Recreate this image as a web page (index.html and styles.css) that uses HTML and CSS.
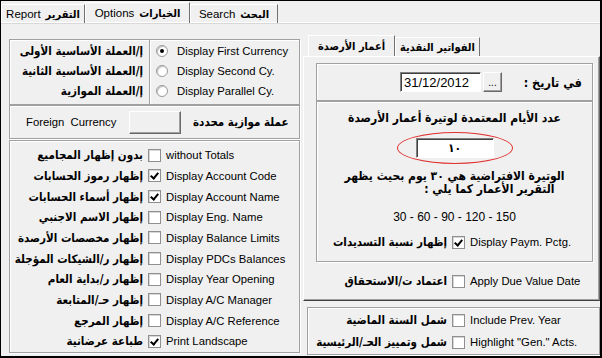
FILE: index.html
```html
<!DOCTYPE html>
<html lang="en">
<head>
    <meta charset="UTF-8">
    <title>Report Options</title>
    <link rel="stylesheet" href="styles.css">
</head>
<body>
    <div class="window">
        <div class="tabs">
            <div class="tab tab-report">Report <b class="ar">التقرير</b></div>
            <div class="tab tab-options active">Options <b class="ar">الخيارات</b></div>
            <div class="tab tab-search">Search <b class="ar">البحث</b></div>
        </div>

        <div class="page">
            <!-- left side: currency + display options -->
            <div class="left">
                <div class="group radios">
                    <div class="ar-col">
                        <b class="ar">إ/العملة الأساسية الأولى</b>
                        <b class="ar">إ/العملة الأساسية الثانية</b>
                        <b class="ar">إ/العملة الموازية</b>
                    </div>
                    <div class="en-col">
                        <div class="opt"><span class="radio on"></span>Display First Currency</div>
                        <div class="opt"><span class="radio"></span>Display Second Cy.</div>
                        <div class="opt"><span class="radio"></span>Display Parallel Cy.</div>
                    </div>
                </div>

                <div class="group currency">
                    <span class="cur-label">Foreign&nbsp; Currency</span>
                    <span class="btn cur-btn"></span>
                    <b class="ar cur-ar">عملة موازية محددة</b>
                </div>

                <div class="group checks">
                    <div class="row"><b class="ar">بدون إظهار المجاميع</b><span class="check"></span><span>without Totals</span></div>
                    <div class="row"><b class="ar">إظهار رموز الحسابات</b><span class="check on"></span><span>Display Account Code</span></div>
                    <div class="row"><b class="ar">إظهار أسماء الحسابات</b><span class="check on"></span><span>Display Account Name</span></div>
                    <div class="row"><b class="ar">إظهار الاسم الاجنبي</b><span class="check"></span><span>Display Eng. Name</span></div>
                    <div class="row"><b class="ar">إظهار مخصصات الأرصدة</b><span class="check"></span><span>Display Balance Limits</span></div>
                    <div class="row"><b class="ar">إظهار ر/الشيكات المؤجلة</b><span class="check"></span><span>Display PDCs Balances</span></div>
                    <div class="row"><b class="ar">إظهار ر/بداية العام</b><span class="check"></span><span>Display Year Opening</span></div>
                    <div class="row"><b class="ar">إظهار حـ/المتابعة</b><span class="check"></span><span>Display A/C Manager</span></div>
                    <div class="row"><b class="ar">إظهار المرجع</b><span class="check"></span><span>Display A/C Reference</span></div>
                    <div class="row"><b class="ar">طباعة عرضانية</b><span class="check on"></span><span>Print Landscape</span></div>
                </div>
            </div>

            <!-- right side: ageing options -->
            <div class="right">
                <div class="subtabs">
                    <div class="subtab active"><b class="ar">أعمار الأرصدة</b></div>
                    <div class="subtab"><b class="ar">الفواتير النقدية</b></div>
                </div>
                <div class="subpage">
                    <div class="group date-box">
                        <span class="field date-field">31/12/2012</span>
                        <span class="btn dots">...</span>
                        <b class="ar date-label">في تاريخ :</b>
                    </div>

                    <div class="group days">
                        <b class="ar days-title">عدد الأيام المعتمدة لوتيرة أعمار الأرصدة</b>
                        <div class="ring">
                            <span class="field days-field"><b class="ar">١٠</b></span>
                        </div>
                        <div class="note">
                            <b class="ar">الوتيرة الافتراضية هي ٣٠ يوم بحيث يظهر</b>
                            <b class="ar note-2">التقرير الأعمار كما يلي :</b>
                        </div>
                        <div class="periods">30 - 60 - 90 - 120 - 150</div>
                        <div class="row paym"><b class="ar">إظهار نسبة التسديدات</b><span class="check on"></span><span>Display Paym. Pctg.</span></div>
                    </div>

                    <div class="row due"><b class="ar">اعتماد ت/الاستحقاق</b><span class="check"></span><span>Apply Due Value Date</span></div>
                </div>

                <div class="group bottom">
                    <div class="row"><b class="ar">شمل السنة الماضية</b><span class="check"></span><span>Include Prev. Year</span></div>
                    <div class="row"><b class="ar">شمل وتمييز الحـ/الرئيسية</b><span class="check"></span><span>Highlight "Gen." Acts.</span></div>
                </div>
            </div>
        </div>
    </div>
</body>
</html>
```

FILE: styles.css
```css
/* Base */
* {
    box-sizing: border-box;
}

body {
    margin: 0;
    background: #fff;
}

.window {
    width: 602px;
    height: 358px;
    border: 1px solid #000;
    border-right-width: 2px;
    border-bottom-width: 2px;
    background: #f0f0f0;
    font: 11.3px "Liberation Sans", "DejaVu Sans", sans-serif;
    color: #000;
    display: flex;
    flex-direction: column;
    overflow: hidden;
}

.ar {
    font-family: "DejaVu Sans Condensed", "DejaVu Sans", sans-serif;
    font-weight: bold;
    font-size: 11.5px;
    direction: rtl;
    unicode-bidi: isolate;
    white-space: nowrap;
}

/* Top tabs */
.tabs {
    display: flex;
    height: 22px;
    flex: none;
    border-bottom: 1px solid #fff;
    font-size: 11.5px;
}

.tabs .ar {
    font-size: 11px;
}

.tab {
    display: flex;
    align-items: center;
    justify-content: center;
    gap: 5px;
    height: 19px;
    margin-top: 3px;
    border-left: 1px solid #fff;
    border-top: 1px solid #fff;
    border-right: 1px solid #707070;
    white-space: nowrap;
}

.tab.active {
    height: 21px;
    margin-top: 1px;
}

.tab-report { width: 84px; }
.tab-options { width: 105px; }
.tab-search { width: 88px; }

/* Page */
.page {
    flex: 1;
    display: flex;
    border-top: 1px solid #d8d8d8;
}

.left {
    width: 299px;
    padding: 15px 0 0 8px;
    display: flex;
    flex-direction: column;
}

.group {
    border: 1px solid #a0a0a0;
    box-shadow: inset 1px 1px 0 #fff, 1px 1px 0 #fff;
}

/* Radio group */
.radios {
    height: 66px;
    display: grid;
    grid-template-columns: 140px 1fr;
}

.ar-col {
    display: flex;
    flex-direction: column;
    align-items: flex-end;
    padding: 1px 6px 0 0;
    border-right: 1px solid #a0a0a0;
    box-shadow: 1px 0 0 #fff;
}

.ar-col .ar,
.opt {
    height: 20px;
    line-height: 20px;
}

.en-col {
    padding: 1px 0 0 6px;
}

.opt {
    display: flex;
    align-items: center;
    white-space: nowrap;
}

.radio {
    width: 12px;
    height: 12px;
    margin-right: 9px;
    border-radius: 50%;
    border: 1px solid #9a9a9a;
    background: #fff;
    box-shadow: inset 1px 1px 1px #c0c0c0;
    position: relative;
}

.radio.on::after {
    content: "";
    position: absolute;
    left: 3px;
    top: 3px;
    width: 4px;
    height: 4px;
    border-radius: 50%;
    background: #000;
}

/* Foreign currency */
.currency {
    height: 34px;
    display: flex;
    align-items: center;
    padding-left: 16px;
}

.cur-label {
    width: 103px;
    white-space: nowrap;
}

.btn {
    display: inline-flex;
    align-items: center;
    justify-content: center;
    background: #f0f0f0;
    border: 1px solid;
    border-color: #fff #696969 #696969 #fff;
    box-shadow: inset -1px -1px 0 #a0a0a0;
}

.cur-btn {
    width: 52px;
    height: 23px;
}

.cur-ar {
    margin-left: 12px;
}

/* Checkbox rows */
.checks {
    height: 213px;
    margin-top: 1px;
    padding-top: 4px;
}

.row {
    display: grid;
    grid-template-columns: var(--arw, 133px) 13px 1fr;
    column-gap: 5px;
    align-items: center;
    white-space: nowrap;
}

.row .ar {
    text-align: right;
}

.checks .row {
    height: 20.67px;
}

.check {
    width: 13px;
    height: 13px;
    background: #fff;
    border: 1px solid #8f8f8f;
    box-shadow: inset 1px 1px 0 #d8d8d8;
    position: relative;
}

.check.on::after {
    content: "";
    position: absolute;
    left: 2px;
    top: 0px;
    width: 3px;
    height: 6px;
    border: solid #000;
    border-width: 0 2px 2px 0;
    transform: translate(1px, 1px) rotate(40deg);
}

/* Right side */
.right {
    flex: 1;
    padding-left: 3px;
    display: flex;
    flex-direction: column;
}

.subtabs {
    display: flex;
    height: 21px;
    margin-top: 11px;
    padding-left: 5px;
}

.subtabs .ar {
    font-size: 11px;
}

.subtab {
    display: flex;
    align-items: center;
    justify-content: center;
    height: 19px;
    margin-top: 2px;
    border-left: 1px solid #fff;
    border-top: 1px solid #fff;
    border-right: 1px solid #707070;
    width: 85px;
}

.subtab.active {
    width: 87px;
    height: 21px;
    margin-top: 0;
}

.subpage {
    height: 245px;
    border: 1px solid;
    border-color: #fff #696969 #404040 #fff;
    box-shadow: inset -1px -1px 0 #a0a0a0;
    padding: 6px 6px 0 12px;
    display: flex;
    flex-direction: column;
}

.field {
    display: inline-flex;
    align-items: center;
    background: #fff;
    border: 1px solid;
    border-color: #808080 #fff #fff #808080;
    box-shadow: inset 1px 1px 0 #404040;
}

.date-box {
    height: 38px;
    display: flex;
    align-items: center;
    justify-content: flex-end;
    padding-right: 10px;
}

.date-field {
    width: 81px;
    height: 20px;
    padding-left: 3px;
    font-size: 13px;
}

.dots {
    width: 19px;
    height: 20px;
    margin-left: 2px;
    font-size: 10px;
}

.date-label {
    width: 80px;
    text-align: right;
    font-size: 12.5px;
}

/* Days box */
.days {
    height: 161px;
    display: flex;
    flex-direction: column;
    align-items: center;
    padding-top: 9px;
}

.days-title {
    line-height: 14px;
    font-size: 12px;
}

.ring {
    position: relative;
    width: 116px;
    height: 30px;
    margin-top: 8px;
    display: flex;
    align-items: center;
    justify-content: center;
}

.ring::before {
    content: "";
    position: absolute;
    left: 0;
    top: -1px;
    right: 0;
    bottom: -1px;
    border: 1px solid #e03030;
    border-radius: 50%;
}

.days-field {
    width: 78px;
    height: 20px;
    justify-content: center;
}

.days-field .ar {
    font-size: 12px;
}

.note {
    display: flex;
    flex-direction: column;
    align-items: flex-end;
    margin-top: 7px;
    line-height: 13px;
}

.note .ar {
    font-size: 12px;
}

.note-2 {
    margin-right: 10px;
}

.periods {
    margin-top: 14px;
    line-height: 14px;
    font-size: 12px;
}

.paym {
    align-self: stretch;
    --arw: 130px;
    margin-top: 11px;
    height: 14px;
}

.due {
    --arw: 131px;
    margin-top: 12px;
    height: 14px;
}

/* Bottom box */
.bottom {
    height: 48px;
    margin: 6px 0 0 4px;
    padding-top: 1px;
    --arw: 139px;
}

.bottom .row {
    height: 22px;
}
```
